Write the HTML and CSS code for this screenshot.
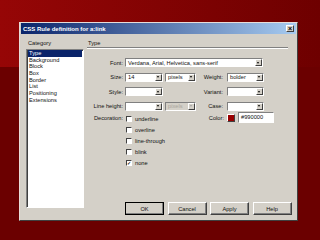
FILE: index.html
```html
<!DOCTYPE html>
<html lang="en">
<head>
    <meta charset="UTF-8">
    <title>CSS Rule definition for a:link</title>
    <link rel="stylesheet" href="styles.css">
</head>
<body>

<div class="dialog">
    <div class="titlebar">
        <span class="title">CSS Rule definition for a:link</span>
        <span class="close-btn">&#215;</span>
    </div>
    <div class="dialog-body">
        <div class="category-col">
            <div class="col-label">Category</div>
            <ul class="category-list">
                <li class="selected">Type</li>
                <li>Background</li>
                <li>Block</li>
                <li>Box</li>
                <li>Border</li>
                <li>List</li>
                <li>Positioning</li>
                <li>Extensions</li>
            </ul>
        </div>

        <div class="panel">
            <div class="panel-title">Type</div>

            <div class="form">
                <div class="row">
                    <span class="label">Font:</span>
                    <span class="select wide"><span class="val">Verdana, Arial, Helvetica, sans-serif</span><span class="arrow"></span></span>
                </div>
                <div class="row">
                    <span class="label">Size:</span>
                    <span class="select"><span class="val">14</span><span class="arrow"></span></span>
                    <span class="select unit"><span class="val">pixels</span><span class="arrow"></span></span>
                    <span class="label2">Weight:</span>
                    <span class="select right"><span class="val">bolder</span><span class="arrow"></span></span>
                </div>
                <div class="row">
                    <span class="label">Style:</span>
                    <span class="select"><span class="val"></span><span class="arrow"></span></span>
                    <span class="spacer"></span>
                    <span class="label2">Variant:</span>
                    <span class="select right"><span class="val"></span><span class="arrow"></span></span>
                </div>
                <div class="row">
                    <span class="label">Line height:</span>
                    <span class="select"><span class="val"></span><span class="arrow"></span></span>
                    <span class="select unit disabled"><span class="val">pixels</span><span class="arrow"></span></span>
                    <span class="label2">Case:</span>
                    <span class="select right"><span class="val"></span><span class="arrow"></span></span>
                </div>

                <div class="deco-row">
                    <span class="label">Decoration:</span>
                    <div class="checks">
                        <label class="check"><span class="box"></span>underline</label>
                        <label class="check"><span class="box"></span>overline</label>
                        <label class="check"><span class="box"></span>line-through</label>
                        <label class="check"><span class="box"></span>blink</label>
                        <label class="check"><span class="box checked">&#10003;</span>none</label>
                    </div>
                    <div class="color-group">
                        <span class="label2">Color:</span>
                        <span class="swatch"></span>
                        <span class="textbox">#990000</span>
                    </div>
                </div>
            </div>

            <div class="buttons">
                <button class="btn default">OK</button>
                <button class="btn">Cancel</button>
                <button class="btn">Apply</button>
                <button class="btn">Help</button>
            </div>
        </div>
    </div>
</div>

</body>
</html>
```

FILE: styles.css
```css
body {
    margin: 0;
    width: 320px;
    height: 240px;
    padding: 22px 0 0 19px;
    box-sizing: border-box;
    overflow: hidden;
    font-family: "Liberation Sans", Arial, sans-serif;
    font-size: 5.7px;
    color: #111;
    background:
        linear-gradient(#6b0000, #6b0000) 0 67px / 100% 100% no-repeat,
        linear-gradient(to right, #960606, #6e0000);
}

.dialog {
    width: 279px;
    height: 199px;
    box-sizing: border-box;
    background-color: #d4d0c8;
    border: 1px solid;
    border-color: #e8dcd8 #404040 #404040 #e8dcd8;
    display: flex;
    flex-direction: column;
}

.titlebar {
    height: 11px;
    margin: 0 1px;
    padding: 0 2px;
    background: linear-gradient(to right, #0a246a, #a6caf0);
    display: flex;
    align-items: center;
    justify-content: space-between;
}

.title {
    color: #fff;
    font-weight: bold;
    font-size: 6px;
}

.close-btn {
    width: 8px;
    height: 7px;
    box-sizing: border-box;
    background-color: #d4d0c8;
    border: 1px solid;
    border-color: #fff #404040 #404040 #fff;
    font-size: 7px;
    line-height: 5px;
    text-align: center;
    font-weight: bold;
    color: #000;
}

.dialog-body {
    flex: 1;
    display: flex;
    padding: 5px 5px 5px 6px;
}

.category-col {
    width: 58px;
    display: flex;
    flex-direction: column;
}

.col-label {
    height: 10px;
    line-height: 9px;
    padding-left: 2px;
}

.category-list {
    list-style: none;
    margin: 0;
    padding: 0 1px;
    height: 159px;
    box-sizing: border-box;
    background-color: #fff;
    border: 1px solid;
    border-color: #808080 #fff #fff #808080;
    box-shadow: inset 1px 1px 0 #404040;
}

.category-list li {
    height: 6.7px;
    line-height: 6.7px;
    padding-left: 1px;
}

.category-list li.selected {
    background-color: #0a246a;
    color: #fff;
}

.panel {
    flex: 1;
    margin-left: 3px;
    display: flex;
    flex-direction: column;
}

.panel-title {
    height: 8px;
    line-height: 8px;
    padding-left: 1px;
    margin-right: 4px;
    border-bottom: 1px solid #808080;
    box-shadow: 0 1px 0 #fff;
}

.form {
    margin-top: 10px;
    display: flex;
    flex-direction: column;
    gap: 5.5px;
}

.row {
    display: flex;
    align-items: center;
    height: 9px;
}

.label {
    width: 36px;
    text-align: right;
    margin-right: 2px;
    flex-shrink: 0;
}

.label2 {
    width: 27px;
    text-align: right;
    margin-right: 4px;
    flex-shrink: 0;
}

.select {
    width: 38px;
    height: 9px;
    box-sizing: border-box;
    background-color: #fff;
    border: 1px solid;
    border-color: #808080 #fff #fff #808080;
    display: flex;
    align-items: center;
    flex-shrink: 0;
}

.select .val {
    flex: 1;
    padding-left: 2px;
    white-space: nowrap;
    overflow: hidden;
}

.select .arrow {
    width: 7px;
    height: 7px;
    box-sizing: border-box;
    background-color: #d4d0c8;
    border: 1px solid;
    border-color: #fff #404040 #404040 #fff;
    position: relative;
}

.select .arrow::after {
    content: "";
    position: absolute;
    left: 1px;
    top: 1.5px;
    border-left: 1.5px solid transparent;
    border-right: 1.5px solid transparent;
    border-top: 2px solid #000;
}

.select.wide {
    width: 138px;
}

.select.unit {
    width: 31px;
    margin-left: 2px;
}

.spacer {
    width: 33px;
}

.select.right {
    width: 37px;
}

.select.disabled {
    background-color: #d4d0c8;
    color: #a8a49c;
}

.select.disabled .arrow::after {
    border-top-color: #a0a0a0;
}

.deco-row {
    display: flex;
    margin-top: -1px;
}

.deco-row .label {
    line-height: 7px;
}

.checks {
    width: 71px;
    display: flex;
    flex-direction: column;
    gap: 4.5px;
    padding-top: 1px;
}

.check {
    display: flex;
    align-items: center;
    height: 6.5px;
    white-space: nowrap;
}

.box {
    width: 6px;
    height: 6px;
    box-sizing: border-box;
    background-color: #fff;
    border: 1px solid;
    border-color: #404040 #fff #fff #404040;
    margin-right: 3px;
    margin-left: 1px;
    font-size: 5px;
    line-height: 4px;
    text-align: center;
    font-weight: bold;
    color: #000;
}

.color-group {
    display: flex;
    align-items: center;
    height: 11px;
    margin-top: -3px;
}

.color-group .label2 {
    width: 28px;
    margin-right: 3px;
}

.swatch {
    width: 8px;
    height: 8px;
    box-sizing: border-box;
    background-color: #990000;
    border: 1px solid;
    border-color: #fff #404040 #404040 #fff;
    margin-right: 3px;
}

.textbox {
    width: 36px;
    height: 11px;
    box-sizing: border-box;
    background-color: #fff;
    border: 1px solid;
    border-color: #808080 #fff #fff #808080;
    padding-left: 2px;
    line-height: 9px;
}

.buttons {
    margin-top: auto;
    display: flex;
    gap: 3.5px;
    padding-left: 38px;
}

.btn {
    width: 39px;
    height: 13px;
    padding: 0;
    font-family: "Liberation Sans", Arial, sans-serif;
    font-size: 5.7px;
    color: #111;
    background-color: #d4d0c8;
    border: 1px solid;
    border-color: #fff #404040 #404040 #fff;
    box-shadow: inset -1px -1px 0 #808080;
}

.btn.default {
    outline: 1px solid #000;
    outline-offset: -1px;
}
```
